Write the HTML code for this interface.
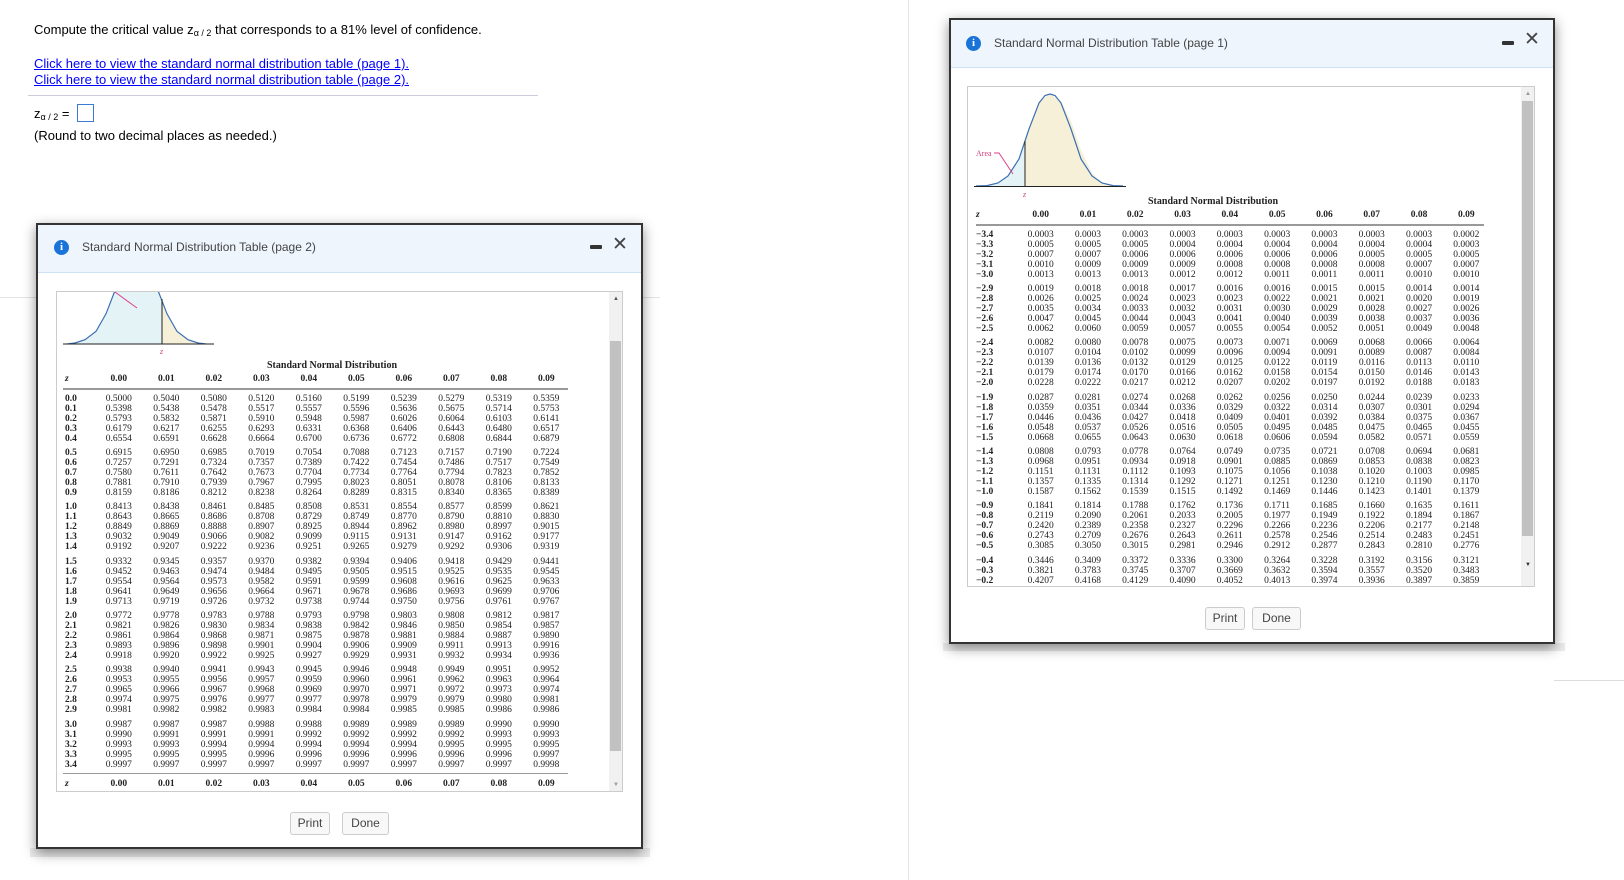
<!DOCTYPE html>
<html><head><meta charset="utf-8">
<style>
*{margin:0;padding:0;box-sizing:border-box}
body{width:1624px;height:880px;background:#fff;position:relative;overflow:hidden;font-family:"Liberation Sans",Arial,sans-serif;color:#000}
.abs{position:absolute}
.q{font-size:13px;left:34px}
.q a{color:#00f;text-decoration:underline}
sub{font-size:9px;vertical-align:-2px}
.dlg{position:absolute;background:#fff;border:2px solid #333;box-shadow:0 4px 12px rgba(0,0,0,.45)}
.hd{position:absolute;left:0;right:0;top:0;height:48px;background:#eef5fd;border-bottom:1px solid #cfe2f5}
.ic{position:absolute;width:15px;height:15px;border-radius:50%;background:#1a73d9;color:#fff;font:bold 11px "Liberation Serif",serif;text-align:center;line-height:15px}
.tt{position:absolute;font-size:12px;color:#444}
.mn{position:absolute;width:12px;height:4px;background:#333;border-radius:1px}
.x{position:absolute;font-size:19px;color:#444;font-weight:300}
.box{position:absolute;border:1px solid #ccc;overflow:hidden;background:#fff}
.sb{position:absolute;top:0;bottom:0;width:13px;background:#f1f1f1}
.th{position:absolute;left:1px;width:11px;background:#c1c1c1}
.tbl{position:absolute;font-family:"Liberation Serif",serif;font-size:9.5px;color:#222}
.r{height:10px;line-height:10px;white-space:nowrap}
.r b{display:inline-block;font-weight:bold}
.r i{display:inline-block;font-style:normal;text-align:center}
.p2 .r b{width:38px;padding-left:8px}.p2 .r i{width:47.5px}
.p1 .r b{width:49px;padding-left:8px}.p1 .r i{width:47.3px}
.g{margin-bottom:4.4px}
.hdr{font-weight:bold;height:12px;line-height:12px}
.hdr b em{font-style:italic}
.btn{position:absolute;height:23px;border:1px solid #ccc;border-radius:3px;background:#f8f8f8;font-size:12px;color:#444;text-align:center;line-height:21px}
</style></head><body>

<div class="abs" style="left:908px;top:0;width:1px;height:880px;background:#e6e6e6"></div>
<div class="abs" style="left:1554px;top:680px;width:70px;height:1px;background:#ddd"></div>
<div class="abs" style="left:0;top:297px;width:660px;height:1px;background:#e3e3e3"></div>

<div class="abs q" style="top:22px">Compute the critical value z<sub>α / 2</sub> that corresponds to a 81% level of confidence.</div>
<div class="abs q" style="top:56px"><a>Click here to view the standard normal distribution table (page 1).</a></div>
<div class="abs q" style="top:72px"><a>Click here to view the standard normal distribution table (page 2).</a></div>
<div class="abs" style="left:28px;top:95px;width:510px;height:1px;background:#ccd"></div>
<div class="abs q" style="top:106px">z<sub>α / 2</sub> =</div>
<div class="abs" style="left:77px;top:104px;width:17px;height:18px;border:1px solid #3a7bd5"></div>
<div class="abs q" style="top:128px">(Round to two decimal places as needed.)</div>

<div class="abs" style="left:30px;top:848px;width:620px;height:9px;background:#ececec"></div>
<div class="abs" style="left:943px;top:643px;width:622px;height:8px;background:#ececec"></div>

<!-- Dialog page 2 -->
<div class="dlg" style="left:36px;top:223px;width:607px;height:626px">
 <div class="hd"></div>
 <div class="ic" style="left:16px;top:15px">i</div>
 <div class="tt" style="left:44px;top:15px">Standard Normal Distribution Table (page 2)</div>
 <div class="mn" style="left:552px;top:20px"></div>
 <div class="x" style="left:574px;top:8px">✕</div>
 <div class="btn" style="left:252px;top:587px;width:40px">Print</div>
 <div class="btn" style="left:304px;top:587px;width:47px">Done</div>
</div>
<div class="box" style="left:56px;top:291px;width:567px;height:501px">
 <svg class="abs" style="left:0;top:0" width="567" height="501">
  <g transform="translate(-56,-291)">
   <path d="M66 343 L74 342 L84 338.7 L95 330.4 L105 312.8 L115 287 L125 261.6 L135.5 251 L146 261.6 L156 287 L161 298 L161 343 Z" fill="#e4f3f6"/>
   <path d="M161 298 L166 312.8 L176 330.4 L187 338.7 L197 342 L205 343 L161 343 Z" fill="#f6f0d8"/>
   <path d="M66 343 L74 342 L84 338.7 L95 330.4 L105 312.8 L115 287 L125 261.6 L135.5 251 L146 261.6 L156 287 L166 312.8 L176 330.4 L187 338.7 L197 342 L205 343" fill="none" stroke="#3b6fb4" stroke-width="1.2"/>
   <line x1="62" y1="343" x2="213" y2="343" stroke="#222" stroke-width="1"/>
   <line x1="161" y1="298" x2="161" y2="343" stroke="#222" stroke-width="1"/>
   <line x1="114" y1="291" x2="136" y2="307" stroke="#e0408a" stroke-width="1"/>
   <text x="159" y="353" font-family="Liberation Serif" font-size="8" fill="#d0407a" font-style="italic">z</text>
  </g>
 </svg>
 <div class="sb" style="right:0"><div class="th" style="top:49px;height:410px"></div></div>
 <div class="abs" style="right:3px;top:4px;font-size:6px;color:#555">▲</div>
 <div class="abs" style="right:3px;bottom:3px;font-size:6px;color:#999">▼</div>
 <div class="tbl p2" style="left:0;top:68px;width:540px">
  <div style="text-align:center;font-weight:bold;font-size:10px;height:13px;padding-left:10px">Standard Normal Distribution</div>
  <div class="r hdr"><b><em>z</em></b><i>0.00</i><i>0.01</i><i>0.02</i><i>0.03</i><i>0.04</i><i>0.05</i><i>0.06</i><i>0.07</i><i>0.08</i><i>0.09</i></div>
  <div style="margin:3px 0 4px 6px;height:1.5px;background:#999;width:505px"></div>
  <div class="g">
  <div class="r"><b>0.0</b><i>0.5000</i><i>0.5040</i><i>0.5080</i><i>0.5120</i><i>0.5160</i><i>0.5199</i><i>0.5239</i><i>0.5279</i><i>0.5319</i><i>0.5359</i></div>
  <div class="r"><b>0.1</b><i>0.5398</i><i>0.5438</i><i>0.5478</i><i>0.5517</i><i>0.5557</i><i>0.5596</i><i>0.5636</i><i>0.5675</i><i>0.5714</i><i>0.5753</i></div>
  <div class="r"><b>0.2</b><i>0.5793</i><i>0.5832</i><i>0.5871</i><i>0.5910</i><i>0.5948</i><i>0.5987</i><i>0.6026</i><i>0.6064</i><i>0.6103</i><i>0.6141</i></div>
  <div class="r"><b>0.3</b><i>0.6179</i><i>0.6217</i><i>0.6255</i><i>0.6293</i><i>0.6331</i><i>0.6368</i><i>0.6406</i><i>0.6443</i><i>0.6480</i><i>0.6517</i></div>
  <div class="r"><b>0.4</b><i>0.6554</i><i>0.6591</i><i>0.6628</i><i>0.6664</i><i>0.6700</i><i>0.6736</i><i>0.6772</i><i>0.6808</i><i>0.6844</i><i>0.6879</i></div>
  </div><div class="g">
  <div class="r"><b>0.5</b><i>0.6915</i><i>0.6950</i><i>0.6985</i><i>0.7019</i><i>0.7054</i><i>0.7088</i><i>0.7123</i><i>0.7157</i><i>0.7190</i><i>0.7224</i></div>
  <div class="r"><b>0.6</b><i>0.7257</i><i>0.7291</i><i>0.7324</i><i>0.7357</i><i>0.7389</i><i>0.7422</i><i>0.7454</i><i>0.7486</i><i>0.7517</i><i>0.7549</i></div>
  <div class="r"><b>0.7</b><i>0.7580</i><i>0.7611</i><i>0.7642</i><i>0.7673</i><i>0.7704</i><i>0.7734</i><i>0.7764</i><i>0.7794</i><i>0.7823</i><i>0.7852</i></div>
  <div class="r"><b>0.8</b><i>0.7881</i><i>0.7910</i><i>0.7939</i><i>0.7967</i><i>0.7995</i><i>0.8023</i><i>0.8051</i><i>0.8078</i><i>0.8106</i><i>0.8133</i></div>
  <div class="r"><b>0.9</b><i>0.8159</i><i>0.8186</i><i>0.8212</i><i>0.8238</i><i>0.8264</i><i>0.8289</i><i>0.8315</i><i>0.8340</i><i>0.8365</i><i>0.8389</i></div>
  </div><div class="g">
  <div class="r"><b>1.0</b><i>0.8413</i><i>0.8438</i><i>0.8461</i><i>0.8485</i><i>0.8508</i><i>0.8531</i><i>0.8554</i><i>0.8577</i><i>0.8599</i><i>0.8621</i></div>
  <div class="r"><b>1.1</b><i>0.8643</i><i>0.8665</i><i>0.8686</i><i>0.8708</i><i>0.8729</i><i>0.8749</i><i>0.8770</i><i>0.8790</i><i>0.8810</i><i>0.8830</i></div>
  <div class="r"><b>1.2</b><i>0.8849</i><i>0.8869</i><i>0.8888</i><i>0.8907</i><i>0.8925</i><i>0.8944</i><i>0.8962</i><i>0.8980</i><i>0.8997</i><i>0.9015</i></div>
  <div class="r"><b>1.3</b><i>0.9032</i><i>0.9049</i><i>0.9066</i><i>0.9082</i><i>0.9099</i><i>0.9115</i><i>0.9131</i><i>0.9147</i><i>0.9162</i><i>0.9177</i></div>
  <div class="r"><b>1.4</b><i>0.9192</i><i>0.9207</i><i>0.9222</i><i>0.9236</i><i>0.9251</i><i>0.9265</i><i>0.9279</i><i>0.9292</i><i>0.9306</i><i>0.9319</i></div>
  </div><div class="g">
  <div class="r"><b>1.5</b><i>0.9332</i><i>0.9345</i><i>0.9357</i><i>0.9370</i><i>0.9382</i><i>0.9394</i><i>0.9406</i><i>0.9418</i><i>0.9429</i><i>0.9441</i></div>
  <div class="r"><b>1.6</b><i>0.9452</i><i>0.9463</i><i>0.9474</i><i>0.9484</i><i>0.9495</i><i>0.9505</i><i>0.9515</i><i>0.9525</i><i>0.9535</i><i>0.9545</i></div>
  <div class="r"><b>1.7</b><i>0.9554</i><i>0.9564</i><i>0.9573</i><i>0.9582</i><i>0.9591</i><i>0.9599</i><i>0.9608</i><i>0.9616</i><i>0.9625</i><i>0.9633</i></div>
  <div class="r"><b>1.8</b><i>0.9641</i><i>0.9649</i><i>0.9656</i><i>0.9664</i><i>0.9671</i><i>0.9678</i><i>0.9686</i><i>0.9693</i><i>0.9699</i><i>0.9706</i></div>
  <div class="r"><b>1.9</b><i>0.9713</i><i>0.9719</i><i>0.9726</i><i>0.9732</i><i>0.9738</i><i>0.9744</i><i>0.9750</i><i>0.9756</i><i>0.9761</i><i>0.9767</i></div>
  </div><div class="g">
  <div class="r"><b>2.0</b><i>0.9772</i><i>0.9778</i><i>0.9783</i><i>0.9788</i><i>0.9793</i><i>0.9798</i><i>0.9803</i><i>0.9808</i><i>0.9812</i><i>0.9817</i></div>
  <div class="r"><b>2.1</b><i>0.9821</i><i>0.9826</i><i>0.9830</i><i>0.9834</i><i>0.9838</i><i>0.9842</i><i>0.9846</i><i>0.9850</i><i>0.9854</i><i>0.9857</i></div>
  <div class="r"><b>2.2</b><i>0.9861</i><i>0.9864</i><i>0.9868</i><i>0.9871</i><i>0.9875</i><i>0.9878</i><i>0.9881</i><i>0.9884</i><i>0.9887</i><i>0.9890</i></div>
  <div class="r"><b>2.3</b><i>0.9893</i><i>0.9896</i><i>0.9898</i><i>0.9901</i><i>0.9904</i><i>0.9906</i><i>0.9909</i><i>0.9911</i><i>0.9913</i><i>0.9916</i></div>
  <div class="r"><b>2.4</b><i>0.9918</i><i>0.9920</i><i>0.9922</i><i>0.9925</i><i>0.9927</i><i>0.9929</i><i>0.9931</i><i>0.9932</i><i>0.9934</i><i>0.9936</i></div>
  </div><div class="g">
  <div class="r"><b>2.5</b><i>0.9938</i><i>0.9940</i><i>0.9941</i><i>0.9943</i><i>0.9945</i><i>0.9946</i><i>0.9948</i><i>0.9949</i><i>0.9951</i><i>0.9952</i></div>
  <div class="r"><b>2.6</b><i>0.9953</i><i>0.9955</i><i>0.9956</i><i>0.9957</i><i>0.9959</i><i>0.9960</i><i>0.9961</i><i>0.9962</i><i>0.9963</i><i>0.9964</i></div>
  <div class="r"><b>2.7</b><i>0.9965</i><i>0.9966</i><i>0.9967</i><i>0.9968</i><i>0.9969</i><i>0.9970</i><i>0.9971</i><i>0.9972</i><i>0.9973</i><i>0.9974</i></div>
  <div class="r"><b>2.8</b><i>0.9974</i><i>0.9975</i><i>0.9976</i><i>0.9977</i><i>0.9977</i><i>0.9978</i><i>0.9979</i><i>0.9979</i><i>0.9980</i><i>0.9981</i></div>
  <div class="r"><b>2.9</b><i>0.9981</i><i>0.9982</i><i>0.9982</i><i>0.9983</i><i>0.9984</i><i>0.9984</i><i>0.9985</i><i>0.9985</i><i>0.9986</i><i>0.9986</i></div>
  </div><div class="g" style="margin-bottom:0">
  <div class="r"><b>3.0</b><i>0.9987</i><i>0.9987</i><i>0.9987</i><i>0.9988</i><i>0.9988</i><i>0.9989</i><i>0.9989</i><i>0.9989</i><i>0.9990</i><i>0.9990</i></div>
  <div class="r"><b>3.1</b><i>0.9990</i><i>0.9991</i><i>0.9991</i><i>0.9991</i><i>0.9992</i><i>0.9992</i><i>0.9992</i><i>0.9992</i><i>0.9993</i><i>0.9993</i></div>
  <div class="r"><b>3.2</b><i>0.9993</i><i>0.9993</i><i>0.9994</i><i>0.9994</i><i>0.9994</i><i>0.9994</i><i>0.9994</i><i>0.9995</i><i>0.9995</i><i>0.9995</i></div>
  <div class="r"><b>3.3</b><i>0.9995</i><i>0.9995</i><i>0.9995</i><i>0.9996</i><i>0.9996</i><i>0.9996</i><i>0.9996</i><i>0.9996</i><i>0.9996</i><i>0.9997</i></div>
  <div class="r"><b>3.4</b><i>0.9997</i><i>0.9997</i><i>0.9997</i><i>0.9997</i><i>0.9997</i><i>0.9997</i><i>0.9997</i><i>0.9997</i><i>0.9997</i><i>0.9998</i></div>
  </div>
  <div style="margin:3px 0 4px 6px;height:1.5px;background:#999;width:505px"></div>
  <div class="r hdr"><b><em>z</em></b><i>0.00</i><i>0.01</i><i>0.02</i><i>0.03</i><i>0.04</i><i>0.05</i><i>0.06</i><i>0.07</i><i>0.08</i><i>0.09</i></div>
 </div>
</div>

<!-- Dialog page 1 -->
<div class="dlg" style="left:949px;top:18px;width:606px;height:626px">
 <div class="hd"></div>
 <div class="ic" style="left:15px;top:16px">i</div>
 <div class="tt" style="left:43px;top:16px">Standard Normal Distribution Table (page 1)</div>
 <div class="mn" style="left:551px;top:21px"></div>
 <div class="x" style="left:573px;top:8px">✕</div>
 <div class="btn" style="left:254px;top:587px;width:40px">Print</div>
 <div class="btn" style="left:301px;top:587px;width:49px">Done</div>
</div>
<div class="box" style="left:967px;top:86px;width:568px;height:501px">
 <svg class="abs" style="left:0;top:0" width="568" height="501">
  <g transform="translate(-967,-86)">
   <path d="M975 185 L986 184.8 L997 182 L1007 175 L1018 160 L1024 140 L1024 185 Z" fill="#e4f3f6"/>
   <path d="M1024 140 L1028 128 L1038 100 L1049 93 L1060 100 L1070 120 L1080 149 L1091 172 L1101 182 L1112 184.6 L1118 185 L1024 185 Z" fill="#f6f0d8"/>
   <path d="M975 185 L986 184.6 L997 182 L1007 175 L1018 158 L1028 128 L1038 102 L1044 94.5 L1049 93 L1054 94.5 L1060 102 L1070 128 L1080 158 L1091 175 L1101 182 L1112 184.6 L1122 185" fill="none" stroke="#3b6fb4" stroke-width="1.2"/>
   <line x1="973" y1="185.5" x2="1125" y2="185.5" stroke="#222"/>
   <line x1="1024" y1="140" x2="1024" y2="185" stroke="#222"/>
   <text x="975" y="155" font-family="Liberation Serif" font-size="8" fill="#d0407a">Area</text>
   <path d="M993 152 L998 152 L1012 173" fill="none" stroke="#e0408a" stroke-width="1"/>
   <text x="1022" y="196" font-family="Liberation Serif" font-size="8" fill="#d0407a" font-style="italic">z</text>
  </g>
 </svg>
 <div class="sb" style="right:0"><div class="th" style="top:14px;height:435px"></div></div>
 <div class="abs" style="right:3px;top:4px;font-size:6px;color:#999">▲</div>
 <div class="abs" style="right:3px;bottom:18px;font-size:6px;color:#333">▼</div>
 <div class="tbl p1" style="left:0;top:109px;width:540px">
  <div style="text-align:center;font-weight:bold;font-size:10px;height:13px;width:490px">Standard Normal Distribution</div>
  <div class="r hdr"><b><em>z</em></b><i>0.00</i><i>0.01</i><i>0.02</i><i>0.03</i><i>0.04</i><i>0.05</i><i>0.06</i><i>0.07</i><i>0.08</i><i>0.09</i></div>
  <div style="margin:3px 0 4px 8px;height:1.5px;background:#999;width:508px"></div>
  <div class="g">
  <div class="r"><b>−3.4</b><i>0.0003</i><i>0.0003</i><i>0.0003</i><i>0.0003</i><i>0.0003</i><i>0.0003</i><i>0.0003</i><i>0.0003</i><i>0.0003</i><i>0.0002</i></div>
  <div class="r"><b>−3.3</b><i>0.0005</i><i>0.0005</i><i>0.0005</i><i>0.0004</i><i>0.0004</i><i>0.0004</i><i>0.0004</i><i>0.0004</i><i>0.0004</i><i>0.0003</i></div>
  <div class="r"><b>−3.2</b><i>0.0007</i><i>0.0007</i><i>0.0006</i><i>0.0006</i><i>0.0006</i><i>0.0006</i><i>0.0006</i><i>0.0005</i><i>0.0005</i><i>0.0005</i></div>
  <div class="r"><b>−3.1</b><i>0.0010</i><i>0.0009</i><i>0.0009</i><i>0.0009</i><i>0.0008</i><i>0.0008</i><i>0.0008</i><i>0.0008</i><i>0.0007</i><i>0.0007</i></div>
  <div class="r"><b>−3.0</b><i>0.0013</i><i>0.0013</i><i>0.0013</i><i>0.0012</i><i>0.0012</i><i>0.0011</i><i>0.0011</i><i>0.0011</i><i>0.0010</i><i>0.0010</i></div>
  </div><div class="g">
  <div class="r"><b>−2.9</b><i>0.0019</i><i>0.0018</i><i>0.0018</i><i>0.0017</i><i>0.0016</i><i>0.0016</i><i>0.0015</i><i>0.0015</i><i>0.0014</i><i>0.0014</i></div>
  <div class="r"><b>−2.8</b><i>0.0026</i><i>0.0025</i><i>0.0024</i><i>0.0023</i><i>0.0023</i><i>0.0022</i><i>0.0021</i><i>0.0021</i><i>0.0020</i><i>0.0019</i></div>
  <div class="r"><b>−2.7</b><i>0.0035</i><i>0.0034</i><i>0.0033</i><i>0.0032</i><i>0.0031</i><i>0.0030</i><i>0.0029</i><i>0.0028</i><i>0.0027</i><i>0.0026</i></div>
  <div class="r"><b>−2.6</b><i>0.0047</i><i>0.0045</i><i>0.0044</i><i>0.0043</i><i>0.0041</i><i>0.0040</i><i>0.0039</i><i>0.0038</i><i>0.0037</i><i>0.0036</i></div>
  <div class="r"><b>−2.5</b><i>0.0062</i><i>0.0060</i><i>0.0059</i><i>0.0057</i><i>0.0055</i><i>0.0054</i><i>0.0052</i><i>0.0051</i><i>0.0049</i><i>0.0048</i></div>
  </div><div class="g">
  <div class="r"><b>−2.4</b><i>0.0082</i><i>0.0080</i><i>0.0078</i><i>0.0075</i><i>0.0073</i><i>0.0071</i><i>0.0069</i><i>0.0068</i><i>0.0066</i><i>0.0064</i></div>
  <div class="r"><b>−2.3</b><i>0.0107</i><i>0.0104</i><i>0.0102</i><i>0.0099</i><i>0.0096</i><i>0.0094</i><i>0.0091</i><i>0.0089</i><i>0.0087</i><i>0.0084</i></div>
  <div class="r"><b>−2.2</b><i>0.0139</i><i>0.0136</i><i>0.0132</i><i>0.0129</i><i>0.0125</i><i>0.0122</i><i>0.0119</i><i>0.0116</i><i>0.0113</i><i>0.0110</i></div>
  <div class="r"><b>−2.1</b><i>0.0179</i><i>0.0174</i><i>0.0170</i><i>0.0166</i><i>0.0162</i><i>0.0158</i><i>0.0154</i><i>0.0150</i><i>0.0146</i><i>0.0143</i></div>
  <div class="r"><b>−2.0</b><i>0.0228</i><i>0.0222</i><i>0.0217</i><i>0.0212</i><i>0.0207</i><i>0.0202</i><i>0.0197</i><i>0.0192</i><i>0.0188</i><i>0.0183</i></div>
  </div><div class="g">
  <div class="r"><b>−1.9</b><i>0.0287</i><i>0.0281</i><i>0.0274</i><i>0.0268</i><i>0.0262</i><i>0.0256</i><i>0.0250</i><i>0.0244</i><i>0.0239</i><i>0.0233</i></div>
  <div class="r"><b>−1.8</b><i>0.0359</i><i>0.0351</i><i>0.0344</i><i>0.0336</i><i>0.0329</i><i>0.0322</i><i>0.0314</i><i>0.0307</i><i>0.0301</i><i>0.0294</i></div>
  <div class="r"><b>−1.7</b><i>0.0446</i><i>0.0436</i><i>0.0427</i><i>0.0418</i><i>0.0409</i><i>0.0401</i><i>0.0392</i><i>0.0384</i><i>0.0375</i><i>0.0367</i></div>
  <div class="r"><b>−1.6</b><i>0.0548</i><i>0.0537</i><i>0.0526</i><i>0.0516</i><i>0.0505</i><i>0.0495</i><i>0.0485</i><i>0.0475</i><i>0.0465</i><i>0.0455</i></div>
  <div class="r"><b>−1.5</b><i>0.0668</i><i>0.0655</i><i>0.0643</i><i>0.0630</i><i>0.0618</i><i>0.0606</i><i>0.0594</i><i>0.0582</i><i>0.0571</i><i>0.0559</i></div>
  </div><div class="g">
  <div class="r"><b>−1.4</b><i>0.0808</i><i>0.0793</i><i>0.0778</i><i>0.0764</i><i>0.0749</i><i>0.0735</i><i>0.0721</i><i>0.0708</i><i>0.0694</i><i>0.0681</i></div>
  <div class="r"><b>−1.3</b><i>0.0968</i><i>0.0951</i><i>0.0934</i><i>0.0918</i><i>0.0901</i><i>0.0885</i><i>0.0869</i><i>0.0853</i><i>0.0838</i><i>0.0823</i></div>
  <div class="r"><b>−1.2</b><i>0.1151</i><i>0.1131</i><i>0.1112</i><i>0.1093</i><i>0.1075</i><i>0.1056</i><i>0.1038</i><i>0.1020</i><i>0.1003</i><i>0.0985</i></div>
  <div class="r"><b>−1.1</b><i>0.1357</i><i>0.1335</i><i>0.1314</i><i>0.1292</i><i>0.1271</i><i>0.1251</i><i>0.1230</i><i>0.1210</i><i>0.1190</i><i>0.1170</i></div>
  <div class="r"><b>−1.0</b><i>0.1587</i><i>0.1562</i><i>0.1539</i><i>0.1515</i><i>0.1492</i><i>0.1469</i><i>0.1446</i><i>0.1423</i><i>0.1401</i><i>0.1379</i></div>
  </div><div class="g">
  <div class="r"><b>−0.9</b><i>0.1841</i><i>0.1814</i><i>0.1788</i><i>0.1762</i><i>0.1736</i><i>0.1711</i><i>0.1685</i><i>0.1660</i><i>0.1635</i><i>0.1611</i></div>
  <div class="r"><b>−0.8</b><i>0.2119</i><i>0.2090</i><i>0.2061</i><i>0.2033</i><i>0.2005</i><i>0.1977</i><i>0.1949</i><i>0.1922</i><i>0.1894</i><i>0.1867</i></div>
  <div class="r"><b>−0.7</b><i>0.2420</i><i>0.2389</i><i>0.2358</i><i>0.2327</i><i>0.2296</i><i>0.2266</i><i>0.2236</i><i>0.2206</i><i>0.2177</i><i>0.2148</i></div>
  <div class="r"><b>−0.6</b><i>0.2743</i><i>0.2709</i><i>0.2676</i><i>0.2643</i><i>0.2611</i><i>0.2578</i><i>0.2546</i><i>0.2514</i><i>0.2483</i><i>0.2451</i></div>
  <div class="r"><b>−0.5</b><i>0.3085</i><i>0.3050</i><i>0.3015</i><i>0.2981</i><i>0.2946</i><i>0.2912</i><i>0.2877</i><i>0.2843</i><i>0.2810</i><i>0.2776</i></div>
  </div><div class="g">
  <div class="r"><b>−0.4</b><i>0.3446</i><i>0.3409</i><i>0.3372</i><i>0.3336</i><i>0.3300</i><i>0.3264</i><i>0.3228</i><i>0.3192</i><i>0.3156</i><i>0.3121</i></div>
  <div class="r"><b>−0.3</b><i>0.3821</i><i>0.3783</i><i>0.3745</i><i>0.3707</i><i>0.3669</i><i>0.3632</i><i>0.3594</i><i>0.3557</i><i>0.3520</i><i>0.3483</i></div>
  <div class="r"><b>−0.2</b><i>0.4207</i><i>0.4168</i><i>0.4129</i><i>0.4090</i><i>0.4052</i><i>0.4013</i><i>0.3974</i><i>0.3936</i><i>0.3897</i><i>0.3859</i></div>
  <div class="r"><b>−0.1</b><i>0.4602</i><i>0.4562</i><i>0.4522</i><i>0.4483</i><i>0.4443</i><i>0.4404</i><i>0.4364</i><i>0.4325</i><i>0.4286</i><i>0.4247</i></div>
  </div>
 </div>
</div>

</body></html>
